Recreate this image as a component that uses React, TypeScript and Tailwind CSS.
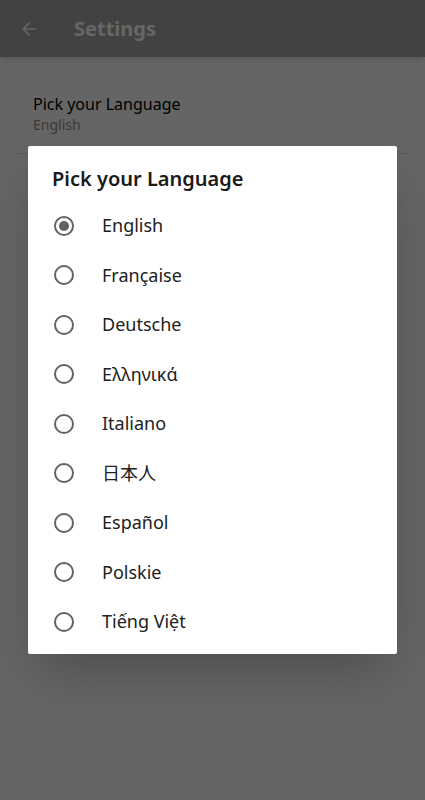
import { ArrowLeft } from 'lucide-react'

const languages = [
  'English',
  'Française',
  'Deutsche',
  'Ελληνικά',
  'Italiano',
  '日本人',
  'Español',
  'Polskie',
  'Tiếng Việt',
]

function Radio({ checked }: { checked: boolean }) {
  return (
    <span className="w-5 h-5 rounded-full border-2 border-[#636363] flex items-center justify-center flex-shrink-0">
      {checked && <span className="w-[10px] h-[10px] rounded-full bg-[#636363]" />}
    </span>
  )
}

export default function App() {
  const selected = 'English'

  return (
    <div
      className="relative w-[425px] h-[800px] overflow-hidden bg-[#fcfcfc]"
      style={{ fontFamily: '"Noto Sans", "Noto Sans CJK JP", sans-serif' }}
    >
      {/* App bar */}
      <div className="h-[57px] bg-[#a6a6a6] flex items-center shadow-md">
        <ArrowLeft className="w-5 h-5 ml-[19px] text-white" strokeWidth={2} />
        <h1 className="ml-[35px] text-[20px] font-bold text-white">Settings</h1>
      </div>

      {/* Preference row */}
      <div className="mx-[17px] px-[16px] pt-[36px] pb-[18px] border-b border-[#dcdcdc]">
        <div className="text-[16px] leading-[22px] text-black">Pick your Language</div>
        <div className="text-[14px] leading-[20px] text-[#939393]">English</div>
      </div>

      {/* Scrim + dialog */}
      <div className="absolute inset-0 bg-black/60">
        <div className="ml-[28px] mt-[146px] w-[369px] bg-white rounded-[2px] shadow-2xl pt-[19px] pb-[7px]">
          <h2 className="px-[24px] text-[20px] leading-[28px] font-semibold text-[#1a1a1a]">
            Pick your Language
          </h2>
          <div className="mt-[8px]">
            {languages.map(lang => (
              <div key={lang} className="h-[49.5px] flex items-center pl-[26px]">
                <Radio checked={lang === selected} />
                <span className="ml-[28px] text-[18px] text-[#212121]">{lang}</span>
              </div>
            ))}
          </div>
        </div>
      </div>
    </div>
  )
}
